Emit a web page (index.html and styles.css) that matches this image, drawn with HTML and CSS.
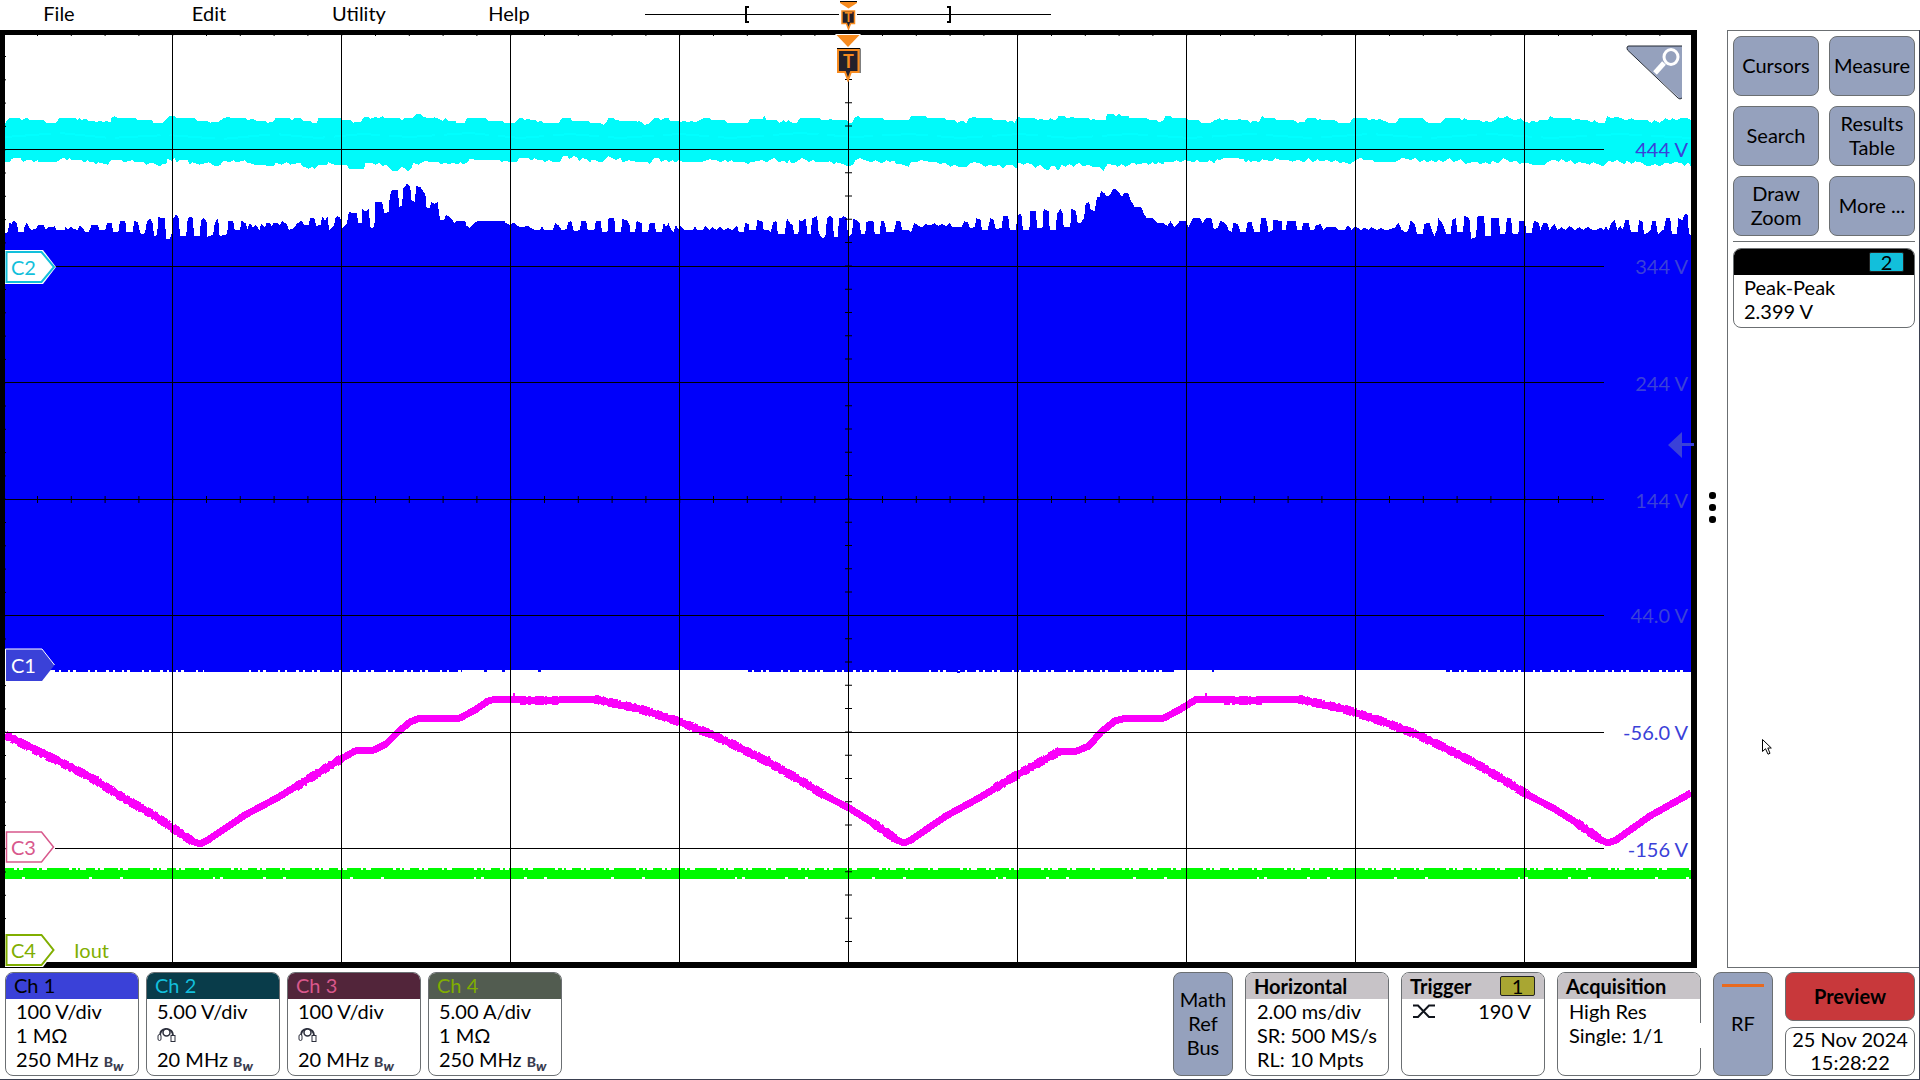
FILE: index.html
```html
<!DOCTYPE html>
<html lang="en">
<head>
<meta charset="utf-8">
<meta name="viewport" content="width=device-width, initial-scale=1">
<title>Oscilloscope</title>
<link rel="stylesheet" href="styles.css">
</head>
<body>
<header class="topbar">
  <nav class="menu" aria-label="Main menu">
    <button type="button">File</button>
    <button type="button">Edit</button>
    <button type="button">Utility</button>
    <button type="button">Help</button>
  </nav>
  <svg class="overview" viewBox="644 0 408 30" role="img" aria-label="Record overview">
    <path d="M645 14.5H1051" stroke="#000"/>
    <path d="M749 7H746V22H749M947 7H950V22H947" fill="none" stroke="#000" stroke-width="2"/>
    <rect x="839" y="9" width="18" height="16" fill="#fff"/>
    <path d="M840 1H857V3L848.500 8.500L840 3Z" fill="#f78b1f"/>
    <path d="M840 1.500H857" stroke="#000"/>
    <path d="M842 11H854.500V23.500H850.500L848.500 29L846.500 23.500H842Z" fill="#23202a" stroke="#f78b1f" stroke-width="1.500"/>
    <text class="mark-text" x="848.500" y="22" font-size="13">T</text>
  </svg>
</header>

<main class="workspace">
  <section class="scope" aria-label="Waveform view">
    <svg class="plot" viewBox="5 35 1686 927" preserveAspectRatio="none" aria-hidden="true">
      <!-- channel 2 -->
      <g class="wave" fill="#00fafa">
        <path transform="scale(.408163 .333333)" d="M12 370L22 355H50L53 362L62 355H68L72 361H108L112 368H138L144 355H185L190 360L195 355L200 360L210 356L215 362H230L235 368L245 362L255 367L262 362L270 368L273 355L280 348L288 354H330L340 361H372L376 368H398L405 360L415 349H428L432 355H478L482 362H508L514 368L535 365L548 355L560 350L565 355H602L606 361L620 356L628 362H650L655 368L668 366L675 355H710L715 361L722 355H738L742 362H760L766 368H776L780 355H836L840 361H860L865 368L885 365L892 350H902L908 356L922 350L926 356L938 348L944 355H980L985 360L990 355H1010L1020 343H1030L1036 350L1050 355L1065 352L1075 357L1085 362L1092 355L1098 362H1115L1118 368H1138L1144 355H1190L1196 362H1230L1236 368H1262L1272 355H1280L1286 361L1294 355L1300 361H1312L1318 366L1325 362L1330 368H1370L1376 355H1398L1402 362H1440L1446 368H1470L1478 374L1484 370L1490 355H1504L1508 361L1568 365H1572V487H1568L1540 481L1525 487L1520 474L1508 480L1500 474L1490 468L1478 484L1470 487L1462 482L1450 480L1445 487L1440 480L1428 474L1420 484L1415 474L1405 468L1395 478L1390 467H1380L1372 485L1355 487L1345 480L1335 487L1330 481H1318L1310 475L1302 481L1295 474H1272L1266 487H1248L1240 481L1228 487L1225 480H1190L1150 478L1145 487L1135 493L1128 487L1120 494L1110 488L1100 494L1090 487L1080 494L1075 487H1052L1046 481L1035 487L1025 494L1012 488L1008 505L1000 514L995 508L985 500L975 513H962L955 505L945 494L938 500L930 488L920 494L910 488H896L892 506H855L850 495H820L805 487L800 494H782L775 500L770 507L765 500L756 506L740 498L735 488L712 494L702 487L690 494L676 488L670 499H655L650 494H625L606 488L600 481L578 487L572 481L560 487L548 481L540 494L532 500L520 494L512 487L488 494L472 487L465 493L460 481H440L433 487L428 474L420 484L411 474L407 493H398L392 500L382 494L372 488L358 494L352 487H330L325 480L302 487L298 481H272L264 494L240 487L235 493L230 487H220L215 481L206 487L200 481H176L170 474L164 482L158 473L148 478L138 487H96L92 481L82 487L78 480H68L56 486L50 474L38 473L28 478L24 485L12 487Z"/>
        <path transform="translate(640) scale(.408163 .333333)" d="M-4 362L5 368L12 375L22 370L34 355H46L52 360L60 355H70L74 362H95L98 368L108 362L118 368L126 362L135 368L145 362L155 355H172L176 361H208L214 368H265L270 356H300L306 348L310 361H336L342 368L352 361L358 368L364 361L372 368H384L392 355H440L444 361H462L466 355L472 361H508L512 368H520L526 352L534 348L542 355H595L598 361H658L664 348H700L704 355H748L752 361H770L778 368L790 362L800 370L806 355L820 350L826 355H862L866 361H895L900 366L912 362L918 368L926 348L932 355H968L974 361L982 355L990 361H1000L1006 355L1018 361L1026 348H1040L1046 355L1060 350L1068 355H1100L1104 361L1112 355L1118 361H1140L1144 342H1160L1166 348L1174 342L1180 348H1196L1200 355H1242L1250 361H1266L1272 368L1282 361L1288 348H1300L1306 355H1340L1346 361H1370L1376 368H1398L1408 361L1420 355L1426 361L1436 355L1444 361H1464L1468 355L1476 361H1490L1496 368L1504 361L1516 366L1524 348L1530 355H1555L1560 361H1572V480L1564 478L1556 474L1548 484L1534 480L1524 478L1518 487L1504 481L1498 487L1490 480L1484 487L1478 476L1430 474L1422 480L1414 478L1406 490L1396 480L1390 487L1370 485L1365 478L1358 487L1335 480L1325 487L1315 481L1305 487H1285L1282 494L1270 487L1262 494L1256 487L1246 494L1238 488L1216 494L1208 487L1200 494L1190 500L1180 493L1170 500L1162 494L1145 493L1135 513L1126 500L1108 500L1100 494L1085 500L1075 488L1062 500L1052 492L1042 500L1034 494L1024 513L1016 498H1008L1000 512L990 505L980 494L968 504L960 494L950 488L940 494L928 487L922 506L912 495L900 494L890 506L880 493L870 500L856 494L846 500L832 490L820 487L810 488L800 500L780 500L770 494L760 500L745 487L735 494L728 487L700 484L688 480L676 487L664 485L658 500L645 494L628 492L622 481L612 487L604 480L594 490L576 481L566 487L550 480L540 474L528 480L522 494L510 500L500 494L490 490L480 487L476 493L466 484L448 487L430 485L424 478L415 487L408 480L396 474L382 487L372 490L366 480L360 490L352 482L340 487L330 474L318 480L310 487L300 480L270 487L264 494L258 487H230L224 480L216 487L210 480L196 487L188 480L170 478L150 487H105L96 480L86 487L80 480L70 487L62 478L52 487L46 474H34L24 494L18 487H-4Z"/>
        <path transform="translate(1280) scale(.408163 .333333)" d="M-4 361H35L42 368L60 366L66 355H88L92 361L98 355L104 361H135L142 368H172L178 355H212L218 361L228 355L236 361L245 356L252 361L266 368H285L292 355H350L354 361L362 368H395L404 355H440L446 361L452 355L462 361H490L498 368L505 361L514 368L526 361L534 352L545 355L556 348L564 355L576 361L590 355L598 366L612 368L620 361L628 368L634 361H655L662 348L672 355H712L718 361L728 355L738 361H755L762 368L770 361L780 368H796L802 348L812 355L826 350L836 355L848 361L862 355L870 361H900L910 368L918 361L930 368L938 361L944 355L954 361L962 355L972 361L980 355H1000L1006 361V497L1000 487L992 498L984 490L968 486L958 492L945 488L930 499L918 492L905 499L893 495L885 487L870 484L862 492L850 482L845 492L835 488L825 480L815 487L805 482L792 500L782 494L768 487L758 494L744 488L730 487L722 492L712 481L702 487L690 478L682 485L672 480L660 482L650 494L620 494L600 487L588 492L578 482L565 487L548 474L535 490L520 482L515 494L505 487L490 492L482 485L470 487L455 492L442 478L425 487L415 474L400 487L390 480L380 487L372 481L362 487L352 480L342 487L332 474L320 480L300 474L280 487H235L225 480H205L198 474L185 480L172 493L155 485L148 490L136 480L125 487L115 480L100 485L92 478L80 487L70 474L60 487L45 480L30 485L20 480L0 478H-4Z"/>
        <path fill="none" stroke="#00ffff" stroke-width="2" stroke-dasharray="46 9" d="M5 137L60 133L110 138L167 135L222 139L275 134L318 138L363 134L410 137L470 133L520 138L570 134L620 138L680 134L730 138L800 133L855 137L910 134L960 138L1020 134L1070 138L1130 134L1190 138L1250 134L1310 138L1370 134L1430 138L1490 134L1550 138L1620 134L1691 138"/>
      </g>

      <!-- channel 1 -->
      <g class="wave" fill="#0000fa">
        <path transform="scale(.408163 .333333)" d="M12 700L20 695L22 668L28 672L34 660L42 672L45 697H58L60 680L66 668L72 682L76 690L88 686L94 676H108L112 690L118 682H132L134 676L138 690H158L160 682L168 688L174 680L178 685L190 690L196 676L206 690L208 697L218 695L224 676H240L244 690H258L262 668H274L277 697H290L294 662H307L310 697H326L328 662L338 668L342 690L345 703L355 700L360 664L368 655L375 672L377 710L385 705L388 650L396 655H404L407 716H416L420 705L425 655L432 643L438 655L441 708H456L460 655L466 650L473 655L475 708H490L492 660L499 655L506 665L508 710L522 705L526 672L532 655L536 670L538 708L556 703L560 662H571L575 690H588L592 662L602 670L606 688L612 670L620 682L626 675L636 690L640 670L650 682L652 668H662L666 682L670 668H680L684 676L692 664L702 672L708 690L720 685L728 670L740 662L745 676H756L760 655H770L775 678L785 675L790 650L796 662L803 650L806 690L818 678L822 655L828 648L834 655L838 684L850 672L855 634L862 640H874L878 668H886L888 628L896 634L903 628L908 684L917 682L920 606H936L942 640L952 635L955 588L960 570H975L978 620L985 618L988 565L998 550L1005 560L1008 600L1016 606L1020 558L1030 562L1042 582L1045 622L1053 625L1056 606L1065 612L1072 606L1078 660H1088L1092 645L1098 648L1108 658L1112 670L1120 662H1140L1142 676L1150 684L1158 676L1165 665L1185 662H1235L1238 668L1250 676L1258 668L1268 678L1280 682L1292 677L1300 684L1312 690H1322L1328 680L1334 690H1355L1360 668L1370 678L1376 690L1388 688L1392 665L1400 664L1406 695L1420 690L1425 662H1436L1440 690H1456L1460 664H1472L1475 697H1488L1491 655H1505L1508 697L1522 695L1524 655L1536 662L1542 672L1545 697L1556 695L1560 662L1568 668H1572V2010H12Z"/>
        <path transform="translate(640) scale(.408163 .333333)" d="M-4 668H2L6 697H20L24 668H36L39 697H54L58 668L64 680L70 670L76 688L82 697L88 676L94 688L100 678L108 690H130L134 680L142 690H154L160 678L170 690L178 682L188 690L196 680L206 690L216 684L226 690L238 676L242 697H254L258 668L266 672L268 690L284 690L288 660L300 664L303 690H316L320 697L326 668L334 662L338 703H354L360 655L368 670L374 675L378 703H388L390 660L398 664L406 655L410 703H418L422 655L434 648L438 700L448 716L455 705L458 655L466 648L472 655L475 710H484L488 655H494L499 648L506 655L510 712L520 700L522 655L532 662L538 670L542 703H552L554 668L562 662L572 664L575 703H588L590 664L598 662L604 697H622L628 664H638L642 690H658L664 697L672 668L680 676L690 682L700 672L710 676L722 670L732 678L740 670L750 680L758 668L766 682H788L794 664L804 668L808 684L820 682L824 655L834 658L838 690H852L858 655L866 660L872 688L886 684L890 648H902L906 690H920L926 645L934 640L938 690H954L956 634H970L973 684H986L989 626L1001 634L1004 690H1018L1022 640L1030 628L1036 640L1038 682H1054L1057 626L1068 634L1072 668H1080L1088 655L1092 610L1100 606L1104 628L1114 634L1120 590H1126L1130 572L1138 580L1144 590L1152 585L1156 572L1164 565L1172 575L1180 590L1188 578L1196 580L1202 600L1212 622H1228L1234 640L1242 655L1256 655L1268 668H1280L1292 678L1300 664L1310 682L1322 664H1338L1344 682L1354 655H1372L1378 668L1388 655H1400L1406 688L1416 682L1422 662L1436 672L1442 690L1450 697L1454 668L1464 672L1472 697H1484L1488 668L1498 664L1505 697H1518L1522 655H1534L1540 697L1550 690L1552 660L1566 662H1572V2010H-4Z"/>
        <path transform="translate(1280) scale(.408163 .333333)" d="M-4 662H4L6 690H14L18 662H38L42 690H54L56 668H70L74 690H84L88 676L100 672L106 690L114 680H136L142 690H158L166 676L176 690L184 678L198 690L208 682L216 690L224 682L238 690L248 684L256 690L270 688L282 682L290 668L298 690L308 697L314 690L320 662L330 672L336 703H350L353 672L366 668L372 690L378 708L385 690L388 655L396 665L404 690L408 703H418L422 660L430 655L435 697H448L452 648L464 655L468 716L480 712L484 648H500L503 708H516L518 655H536L540 703H552L556 655H566L570 703H584L586 664H600L604 700H616L622 662L634 668L638 690L645 668H654L660 690L672 672L680 690L690 682L700 690L710 678L722 690L734 682L744 690L754 680L766 690L780 688L786 682L794 690L798 680L806 690L812 668L820 660L826 690L834 678L840 690L846 660H854L860 697H876L880 660L888 664L892 703L902 697L908 690L912 662H920L926 703L936 690H940L946 655H956L960 703H972L976 655L986 660L990 645L998 640L1002 700L1006 706V2010H-4Z"/>
      </g>
      <g fill="none" stroke="#0000fa" stroke-width="2">
        <path stroke-dasharray="4 2 7 2 3 3 12 2 5 2 9 3" d="M55 671H204M245 671H462M748 671H900M925 671H1175M1446 671H1691"/>
        <path d="M204 671H245M900 671H925M484 671H487M502 671H505M538 671H541M957 672H960M1212 671H1214"/>
      </g>

      <!-- channel 3 -->
      <path class="trace-3" d="M5 735L41 752L90 777L122 797L155 816L175 830L192 841L200 844L208 840L245 815L277 798L318 773L341 759L355 751L374 750L386 744L398 732L410 722L420 718H460L475 710L488 701L496 699H518L522 700H559L564 699H594L616 704L640 709L680 722L713 735L742 749L770 763L803 782L824 795L849 808L873 823L897 840L904 843L911 840L946 816L979 798L1017 775L1060 751L1077 751L1089 746L1101 732L1115 721L1126 718H1164L1179 710L1197 699H1224L1232 700H1256L1262 699H1298L1320 704L1344 709L1384 722L1418 735L1447 749L1475 763L1507 782L1528 795L1553 808L1577 823L1601 840L1608 843L1616 840L1650 816L1691 793"/>
      <path class="trace-3 trace-3-noise" d="M5 735L90 777L122 797L155 816L192 841M296 787L318 773L341 759M594 699L640 709L680 722L713 735L742 749L770 763L803 782L824 795M873 823L897 840M995 788L1017 775L1060 751M1298 699L1344 709L1384 722L1418 735L1447 749L1475 763L1507 782L1528 795M1577 823L1601 840M520 700H560M1224 700H1262"/>
      <path class="trace-3-spikes" d="M93 774V782M98 776V784M440 718V722M514 693V698M735 740V746M759 752V760M769 756V764M1154 718V722M1206 693V698M1244 700V705"/>

      <!-- channel 4 -->
      <g fill="none" stroke="#00fa00">
        <path stroke-width="7" d="M5 873.500H1691"/>
        <path stroke-width="2" stroke-dasharray="9 3 2 4 14 2 3 5 22 3 4 2 2 6" d="M5 869H1691"/>
        <path stroke-width="2" stroke-dasharray="17 3 64 3 28 3 90 2 5 3 40 3" d="M5 878H1691"/>
      </g>

      <!-- graticule -->
      <path stroke="#000" d="M172.500 35V962M341.500 35V962M510.500 35V962M679.500 35V962M848.500 35V962M1017.500 35V962M1186.500 35V962M1355.500 35V962M1524.500 35V962M5 149.500H1604M55 266.500H1604M5 382.500H1604M5 499.500H1604M5 615.500H1604M5 732.500H1604M55 848.500H1604"/>
      <path class="ticks" stroke-dasharray="1 32.800" d="M37 35.500H1691"/>
      <path class="ticks" stroke-dasharray="1 22.300" d="M5.500 56V962"/>
      <path class="ticks" stroke-width="7" stroke-dasharray="1 22.300" d="M848.500 79V962"/>
      <path class="ticks" stroke-width="7" stroke-dasharray="1 32.800" d="M37 499.500H1604"/>
    </svg>

    <div class="tag tag-2"><svg viewBox="0 0 52 34" aria-hidden="true"><path d="M0 0H38L51 17L38 34H0Z" fill="#fff"/><path d="M1.500 2H36.500L49 17L36.500 32H1.500Z" fill="#fff" stroke="#12bfdb" stroke-width="2"/></svg><span>C2</span></div>
    <div class="tag tag-1"><svg viewBox="0 0 52 34" aria-hidden="true"><path d="M.5 1H37L49.500 17L37 33H.5Z" fill="#3a41d8"/><path d="M.5 33V1H37L49.500 17" fill="none" stroke="#fff"/></svg><span>C1</span></div>
    <div class="tag tag-3"><svg viewBox="0 0 52 34" aria-hidden="true"><path d="M1.500 2H36.500L48.500 17L36.500 32H1.500Z" fill="#fff" stroke="#d8588c" stroke-width="1.500"/></svg><span>C3</span></div>
    <div class="tag tag-4"><svg viewBox="0 0 52 34" aria-hidden="true"><path d="M0 0H38L51 17L38 34H0Z" fill="#fff"/><path d="M1.500 2H36.500L48.500 17L36.500 32H1.500Z" fill="#fff" stroke="#80ae00" stroke-width="2"/></svg><span>C4</span><span class="tag-name">Iout</span></div>

    <ul class="scale">
      <li class="scale-1">444 V</li>
      <li class="scale-2">344 V</li>
      <li class="scale-3">244 V</li>
      <li class="scale-4">144 V</li>
      <li class="scale-5">44.0 V</li>
      <li class="scale-6">-56.0 V</li>
      <li class="scale-7">-156 V</li>
    </ul>

    <svg class="level-arrow" viewBox="0 0 26 26" aria-label="Trigger level"><path d="M0 13L14 0V11H26V14H14V26Z" fill="#3a41d8"/></svg>

    <svg class="trigger-mark" viewBox="0 0 26 48" aria-label="Trigger position">
      <path d="M0 0H26L13 15Z" fill="#fff"/>
      <path d="M1.500 1H24.500L13 13Z" fill="#f78b1f"/>
      <path d="M2 14.500H25V39" fill="none" stroke="#000"/>
      <path d="M3 16H23.500V38H16L13 46L10 38H3Z" fill="#23202a" stroke="#f78b1f" stroke-width="2"/>
      <text class="mark-text" x="13.500" y="34" font-size="18">T</text>
    </svg>

    <button type="button" class="zoom-toggle" aria-label="Zoom">
      <svg viewBox="0 0 57 55" aria-hidden="true">
        <path d="M3 1H56V53Q54 55 52 52L1.500 5Q0 1 3 1Z" fill="#95a1bd"/>
        <path d="M56 1H3Q0 1 1.500 5L52 53Q54 55 56 53" fill="none" stroke="#222833" stroke-width="1"/>
        <path d="M29 28L38 18" stroke="#fff" stroke-width="5"/>
        <ellipse cx="45" cy="12" rx="7" ry="7.500" fill="none" stroke="#fff" stroke-width="3"/>
      </svg>
    </button>
  </section>

  <button type="button" class="splitter" aria-label="Toggle results bar"><i></i><i></i><i></i></button>

  <aside class="results">
    <div class="actions">
      <button type="button" class="soft">Cursors</button>
      <button type="button" class="soft">Measure</button>
      <button type="button" class="soft">Search</button>
      <button type="button" class="soft">Results<br>Table</button>
      <button type="button" class="soft">Draw<br>Zoom</button>
      <button type="button" class="soft">More ...</button>
    </div>
    <article class="card measurement">
      <header><span class="source source-2">2</span></header>
      <p>Peak-Peak<br>2.399 V</p>
    </article>
    <svg class="pointer" viewBox="0 0 10 16" aria-hidden="true"><path d="M.5 .5V12.500L3.500 9.700L6 15.200L8 14.300L5.800 9H9.300Z" fill="#fff" stroke="#000"/></svg>
  </aside>
</main>

<footer class="settings">
  <article class="card channel ch1">
    <header>Ch 1</header>
    <p>100 V/div</p><p>1 MΩ</p><p>250 MHz <b class="bw">B<i>w</i></b></p>
  </article>
  <article class="card channel ch2">
    <header>Ch 2</header>
    <p>5.00 V/div</p>
    <p><svg class="probe" viewBox="0 0 20 15" aria-label="Probe"><path d="M3 8Q3 2 9 1.500Q16 2 16 8" fill="none" stroke="#2c2f3c" stroke-width="2"/><circle cx="9.500" cy="5" r="3.500" fill="#fff" stroke="#2c2f3c" stroke-width="1.500"/><rect x="1" y="7" width="3" height="6" rx="1.500" fill="#fff" stroke="#2c2f3c"/><rect x="14" y="8" width="4" height="6" fill="#fff" stroke="#2c2f3c"/></svg></p>
    <p>20 MHz <b class="bw">B<i>w</i></b></p>
  </article>
  <article class="card channel ch3">
    <header>Ch 3</header>
    <p>100 V/div</p>
    <p><svg class="probe" viewBox="0 0 20 15" aria-label="Probe"><path d="M3 8Q3 2 9 1.500Q16 2 16 8" fill="none" stroke="#2c2f3c" stroke-width="2"/><circle cx="9.500" cy="5" r="3.500" fill="#fff" stroke="#2c2f3c" stroke-width="1.500"/><rect x="1" y="7" width="3" height="6" rx="1.500" fill="#fff" stroke="#2c2f3c"/><rect x="14" y="8" width="4" height="6" fill="#fff" stroke="#2c2f3c"/></svg></p>
    <p>20 MHz <b class="bw">B<i>w</i></b></p>
  </article>
  <article class="card channel ch4">
    <header>Ch 4</header>
    <p>5.00 A/div</p><p>1 MΩ</p><p>250 MHz <b class="bw">B<i>w</i></b></p>
  </article>

  <div class="system">
    <button type="button" class="soft tall">Math<br>Ref<br>Bus</button>
    <article class="card panel">
      <header>Horizontal</header>
      <p>2.00 ms/div</p><p>SR: 500 MS/s</p><p>RL: 10 Mpts</p>
    </article>
    <article class="card panel">
      <header>Trigger <span class="source source-1">1</span></header>
      <p class="level"><svg class="edge" viewBox="0 0 22 15" aria-label="Either edge"><path d="M0 1.500H5L16 13H22M0 13H5L16 1.500H22" fill="none" stroke="#10141c" stroke-width="2"/></svg><span>190 V</span></p>
    </article>
    <article class="card panel acquisition">
      <header>Acquisition</header>
      <p>High Res</p><p>Single: 1/1</p>
    </article>
    <button type="button" class="soft tall rf">RF</button>
    <div class="status">
      <button type="button" class="preview">Preview</button>
      <time class="card clock" datetime="2024-11-25T15:28:22">25 Nov 2024<br>15:28:22</time>
    </div>
  </div>
</footer>
</body>
</html>
```
FILE: styles.css
```css
* { box-sizing: border-box; }

body {
  margin: 0;
  min-height: 100vh;
  display: flex;
  flex-direction: column;
  background: #fff;
  color: #000;
  font: 20px/24px Lato, "Noto Sans", sans-serif;
}

button {
  margin: 0;
  padding: 0 0 2px;
  border: 0;
  background: none;
  color: inherit;
  font: inherit;
}

p { margin: 0; }
svg { display: block; }

/* menu and record overview */
.topbar {
  display: flex;
  gap: 60px;
  height: 30px;
}
.menu {
  display: grid;
  grid-template-columns: repeat(4, 150px);
  height: 28px;
  margin-left: -16px;
}
.overview { width: 408px; height: 30px; }
.mark-text {
  fill: #f78b1f;
  font-weight: 700;
  text-anchor: middle;
}

/* waveform view */
.workspace {
  flex: 1;
  display: flex;
  border-right: 1px solid #3a3f50;
}
.scope {
  position: relative;
  flex: 1;
  min-width: 0;
  border: solid #000;
  border-width: 5px 6px 6px 5px;
}
.plot {
  position: absolute;
  inset: 0;
  width: 100%;
  height: 100%;
}
.wave { shape-rendering: crispEdges; }
.trace-3 {
  fill: none;
  stroke: #fa00fa;
  stroke-width: 7;
  stroke-linejoin: round;
  shape-rendering: crispEdges;
}
.trace-3-noise {
  stroke-width: 9;
  stroke-dasharray: 6 2 3 4 9 1 2 5;
}
.trace-3-spikes {
  stroke: #fa00fa;
  stroke-width: 2;
}
.ticks { fill: none; stroke: #000; }

.tag {
  position: absolute;
  left: 0;
  height: 34px;
  transform: translateY(-50%);
  display: flex;
  align-items: center;
}
.tag svg { width: 52px; height: 34px; }
.tag span { position: absolute; left: 6px; }
.tag .tag-name { left: 69px; }
.tag-2 { top: 25%; color: #12bfdb; }
.tag-1 { top: 68%; color: #fff; }
.tag-3 { top: 87.600%; color: #d8588c; }
.tag-4 { top: 98.700%; color: #80ae00; }

.scale {
  margin: 0;
  padding: 0;
  list-style: none;
  color: #3a41d8;
}
.scale li {
  position: absolute;
  right: 3px;
  transform: translateY(-50%);
}
.scale-1 { top: 12.350%; }
.scale-2 { top: 24.970%; }
.scale-3 { top: 37.490%; }
.scale-4 { top: 50.110%; }
.scale-5 { top: 62.620%; }
.scale-6 { top: 75.240%; }
.scale-7 { top: 87.760%; }

.level-arrow {
  position: absolute;
  right: -3px;
  top: 44.200%;
  width: 26px;
  height: 26px;
  transform: translateY(-50%);
}
.trigger-mark {
  position: absolute;
  left: 50%;
  top: -1px;
  width: 26px;
  height: 48px;
  transform: translateX(-50%);
}
.zoom-toggle {
  position: absolute;
  top: 10px;
  right: 8px;
}
.zoom-toggle svg { width: 57px; height: 55px; }

.splitter {
  width: 30px;
  padding-top: 18px;
  display: flex;
  flex-direction: column;
  align-items: center;
  justify-content: center;
  gap: 5px;
}
.splitter i {
  width: 7px;
  height: 7px;
  border-radius: 3px;
  background: #000;
}

/* results bar */
.results {
  position: relative;
  width: 192px;
  padding: 5px 4px 5px 5px;
  border: solid #6b6f72;
  border-width: 1px 0 1px 1px;
}
.actions {
  display: grid;
  grid-template-columns: 1fr 1fr;
  gap: 10px;
  padding-bottom: 5px;
  border-bottom: 1px solid #6b6f72;
}
.soft {
  height: 60px;
  border: 1px solid #6b6f72;
  border-radius: 8px;
  background: #95a1bd;
}
.card {
  border: 1px solid #6b6f72;
  border-radius: 8px;
  background: #fff;
  overflow: hidden;
}
.card header { height: 26px; }
.measurement {
  height: 80px;
  margin-top: 6px;
}
.measurement header {
  display: flex;
  justify-content: flex-end;
  align-items: center;
  padding-right: 10px;
  background: #000;
}
.measurement p { padding-left: 10px; }
.source {
  width: 35px;
  height: 20px;
  border: 1px solid #222;
  border-radius: 2px;
  line-height: 18px;
  text-align: center;
  font-weight: 400;
}
.source-1 { background: #a9a632; }
.source-2 { background: #12bfdb; }
.pointer {
  position: absolute;
  left: 34px;
  top: 708px;
  width: 10px;
  height: 16px;
}

/* settings bar */
.settings {
  display: flex;
  gap: 7px;
  height: 112px;
  padding: 4px 4px 3px 5px;
  border: solid #3a3f50;
  border-width: 0 1px 1px 0;
}
.settings .card { height: 104px; }
.channel { width: 134px; }
.channel header { padding-left: 8px; }
.channel p { height: 24px; padding-left: 10px; white-space: nowrap; }
.ch1 header { background: #3a41d8; }
.ch2 header { background: #093c4a; color: #12bfdb; }
.ch3 header { background: #52253a; color: #d8588c; }
.ch4 header { background: #525c50; color: #80ae00; }
.bw {
  display: inline-flex;
  align-items: flex-end;
  height: 18px;
  color: #3a3d50;
  font-size: 14px;
  font-weight: 900;
  line-height: 18px;
  vertical-align: middle;
}
.bw i { line-height: 10px; }
.probe {
  width: 20px;
  height: 24px;
}

.system {
  display: flex;
  gap: 12px;
  margin-left: auto;
}
.tall { width: 60px; height: 104px; }
.panel { width: 144px; }
.panel header {
  display: flex;
  align-items: center;
  justify-content: space-between;
  padding: 0 9px 0 8px;
  background: #c7c3c7;
  font-weight: 700;
}
.panel p { padding-left: 11px; white-space: nowrap; }
.panel .level {
  display: flex;
  align-items: center;
  justify-content: space-between;
  padding-right: 13px;
}
.edge { width: 22px; height: 15px; }
.acquisition { position: relative; overflow: visible; }
.acquisition header { border-radius: 7px 7px 0 0; }
.acquisition::after {
  content: "";
  position: absolute;
  right: -1px;
  top: 50px;
  width: 2px;
  height: 25px;
  background: #fff;
}
.rf { position: relative; }
.rf::before {
  content: "";
  position: absolute;
  left: 8px;
  right: 8px;
  top: 11px;
  height: 3px;
  background: #e86a1e;
}
.status {
  display: flex;
  flex-direction: column;
  gap: 6px;
  width: 130px;
}
.preview {
  height: 49px;
  border: 1px solid #6b6f72;
  border-radius: 8px;
  background: #c8383b;
  font-weight: 700;
}
.settings .clock {
  height: 49px;
  line-height: 23px;
  text-align: center;
}
```
